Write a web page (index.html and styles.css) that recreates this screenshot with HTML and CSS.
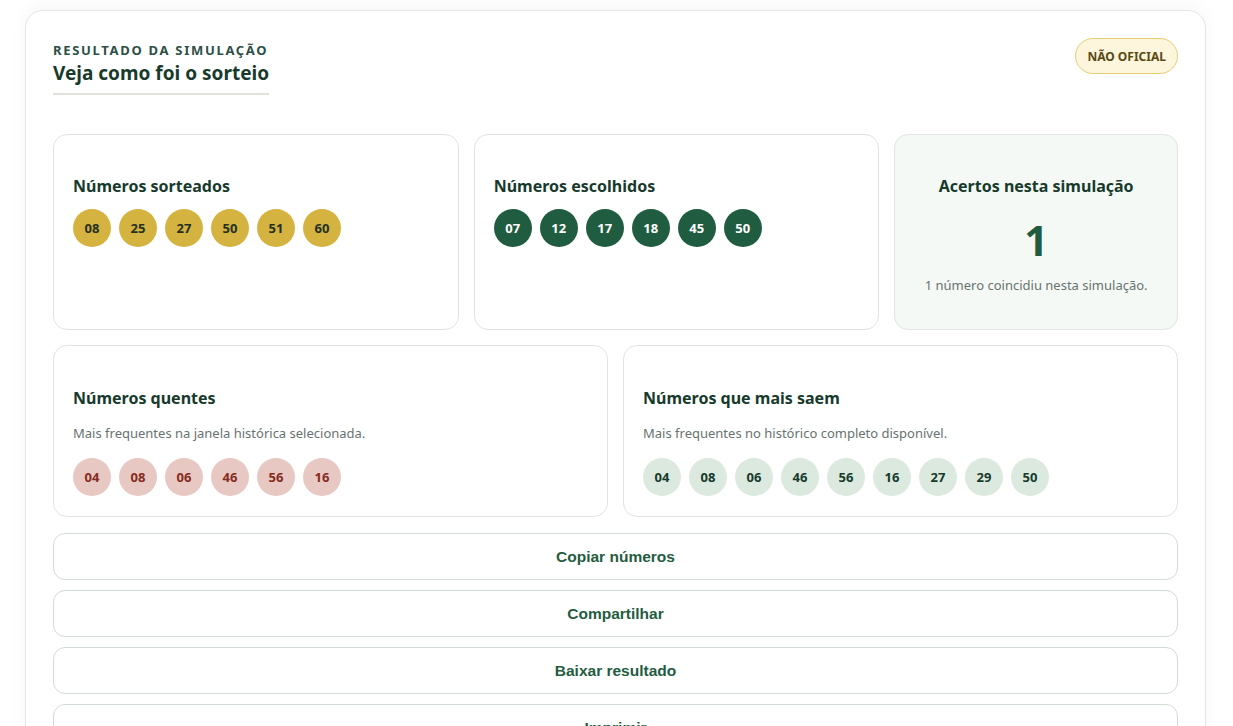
FILE: index.html
```html
<!DOCTYPE html>
<html lang="pt-BR">
<head>
<meta charset="utf-8">
<title>Resultado da simulação</title>
<link rel="stylesheet" href="styles.css">
</head>
<body>
<main class="page">
  <section class="result">
    <header class="result-head">
      <div class="heading">
        <p class="eyebrow">RESULTADO DA SIMULAÇÃO</p>
        <h1 class="title">Veja como foi o sorteio</h1>
      </div>
      <span class="badge">NÃO OFICIAL</span>
    </header>

    <div class="row row-top">
      <div class="card">
        <h2 class="card-title">Números sorteados</h2>
        <div class="balls">
          <span class="ball gold">08</span><span class="ball gold">25</span><span class="ball gold">27</span><span class="ball gold">50</span><span class="ball gold">51</span><span class="ball gold">60</span>
        </div>
      </div>
      <div class="card">
        <h2 class="card-title">Números escolhidos</h2>
        <div class="balls">
          <span class="ball green">07</span><span class="ball green">12</span><span class="ball green">17</span><span class="ball green">18</span><span class="ball green">45</span><span class="ball green">50</span>
        </div>
      </div>
      <div class="card card-hits">
        <h2 class="card-title">Acertos nesta simulação</h2>
        <div class="hits">1</div>
        <p class="hits-note">1 número coincidiu nesta simulação.</p>
      </div>
    </div>

    <div class="row row-bottom">
      <div class="card">
        <h2 class="card-title">Números quentes</h2>
        <p class="card-sub">Mais frequentes na janela histórica selecionada.</p>
        <div class="balls">
          <span class="ball hot">04</span><span class="ball hot">08</span><span class="ball hot">06</span><span class="ball hot">46</span><span class="ball hot">56</span><span class="ball hot">16</span>
        </div>
      </div>
      <div class="card">
        <h2 class="card-title">Números que mais saem</h2>
        <p class="card-sub">Mais frequentes no histórico completo disponível.</p>
        <div class="balls">
          <span class="ball soft">04</span><span class="ball soft">08</span><span class="ball soft">06</span><span class="ball soft">46</span><span class="ball soft">56</span><span class="ball soft">16</span><span class="ball soft">27</span><span class="ball soft">29</span><span class="ball soft">50</span>
        </div>
      </div>
    </div>

    <div class="actions">
      <button class="action" type="button">Copiar números</button>
      <button class="action" type="button">Compartilhar</button>
      <button class="action" type="button">Baixar resultado</button>
      <button class="action" type="button">Imprimir</button>
    </div>
  </section>
</main>
</body>
</html>
```
FILE: styles.css
```css
* { box-sizing: border-box; }

html, body {
  margin: 0;
  padding: 0;
  background: #ffffff;
}

body {
  font-family: "Noto Sans", "Open Sans", "DejaVu Sans", sans-serif;
  color: #173a2c;
}

.page {
  width: 1181px;
  margin: 0 0 0 25px;
  padding-top: 10px;
}

.result {
  background: #ffffff;
  border: 1px solid #e4e6e4;
  border-radius: 18px;
  padding: 27px 27px 20px;
  box-shadow: 0 -6px 18px rgba(0, 0, 0, 0.035);
}

.result-head {
  display: flex;
  justify-content: space-between;
  align-items: flex-start;
  margin-bottom: 39px;
}

.heading {
  display: inline-block;
  border-bottom: 2px solid #dfe3dc;
  padding-bottom: 7px;
  padding-top: 4px;
}

.eyebrow {
  margin: 0;
  font-size: 13px;
  font-weight: 700;
  letter-spacing: 1.7px;
  color: #2d4f48;
  line-height: 16px;
}

.title {
  margin: 2px 0 0;
  font-size: 19px;
  font-weight: 700;
  line-height: 26px;
  color: #173a2c;
}

.badge {
  display: inline-flex;
  align-items: center;
  height: 36px;
  padding: 0 11px;
  border: 1px solid #e6cf72;
  background: #fdf5dc;
  border-radius: 18px;
  font-size: 12px;
  font-weight: 700;
  color: #5a4912;
}

.row {
  display: grid;
  gap: 15px;
  margin-bottom: 15px;
}

.row-top {
  grid-template-columns: 1.43fr 1.43fr 1fr;
}

.row-bottom {
  grid-template-columns: 1fr 1fr;
  margin-bottom: 16px;
}

.card {
  border: 1px solid #e1e4e1;
  border-radius: 14px;
  padding: 39px 19px 20px;
  background: #ffffff;
}

.row-top .card {
  min-height: 196px;
}

.card-title {
  margin: 0 0 11px;
  font-size: 16px;
  font-weight: 700;
  line-height: 24px;
  color: #173a2c;
}

.card-sub {
  margin: 0 0 15px;
  font-size: 13px;
  line-height: 20px;
  color: #687370;
}

.row-bottom .card {
  padding-top: 40px;
}

.row-bottom .card-title {
  margin-bottom: 13px;
}

.balls {
  display: flex;
  flex-wrap: wrap;
  gap: 8px;
}

.ball {
  width: 38px;
  height: 38px;
  border-radius: 50%;
  display: flex;
  align-items: center;
  justify-content: center;
  font-size: 13px;
  font-weight: 700;
}

.gold { background: #d4b340; color: #26301f; }
.green { background: #1f5c40; color: #ffffff; }
.hot { background: #e8c8c2; color: #862b1e; }
.soft { background: #dbe9df; color: #173a2c; }

.card-hits {
  background: #f5f9f6;
  text-align: center;
}

.card-hits .card-title {
  margin-bottom: 19px;
}

.hits {
  font-size: 42px;
  font-weight: 700;
  line-height: 46px;
  color: #1f5c40;
  margin-bottom: 12px;
}

.hits-note {
  margin: 0;
  font-size: 13px;
  line-height: 20px;
  color: #687370;
}

.actions {
  display: flex;
  flex-direction: column;
  gap: 10px;
}

.action {
  display: block;
  width: 100%;
  height: 47px;
  border: 1px solid #d2dbd4;
  border-radius: 12px;
  background: #ffffff;
  font-family: "Liberation Sans", Arial, sans-serif;
  font-size: 15.5px;
  font-weight: 700;
  color: #1f5c40;
}
```
